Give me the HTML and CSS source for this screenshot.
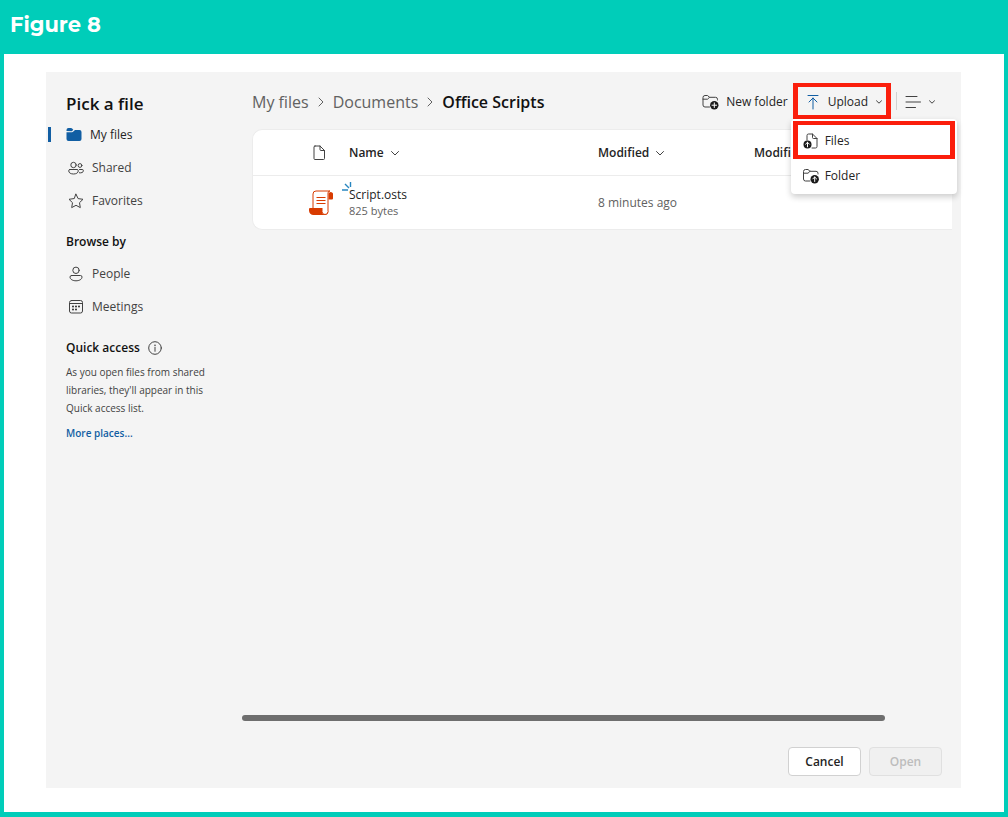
FILE: index.html
```
<!DOCTYPE html>
<html lang="en">
<head>
    <meta charset="UTF-8">
    <meta name="viewport" content="width=device-width, initial-scale=1.0">
    <title>Figure 8</title>
    <link rel="stylesheet" href="styles.css">
</head>
<body>
    <h1 class="figure-title">Figure 8</h1>
    <div class="sheet">
        <div class="picker">
            <aside class="sidebar">
                <h2>Pick a file</h2>
                <nav class="nav">
                    <a href="#" class="nav-item active">
                        <svg width="16" height="16" viewBox="0 0 16 16"><path fill="#115ea3" d="M.5 4V3A2 2 0 0 1 2.500 1H5a1.500 1.500 0 0 1 1.100.5L7.300 2.700 5.800 4.200Z"/><path fill="#115ea3" d="M.5 5.200H6a1.500 1.500 0 0 0 1-.4L9 3H13.500a2 2 0 0 1 2 2v7a2 2 0 0 1-2 2H2.500a2 2 0 0 1-2-2Z"/></svg>
                        My files
                    </a>
                    <a href="#" class="nav-item">
                        <svg class="line" width="16" height="16" viewBox="0 0 16 16"><circle cx="5.500" cy="5" r="2.700"/><circle cx="12" cy="5.500" r="1.900"/><path d="M2 9.500H9a1.300 1.300 0 0 1 1.300 1.300C10.300 13 8 14 5.500 14S.7 13 .7 10.800A1.300 1.300 0 0 1 2 9.500ZM11.500 9.500h2.700a1.200 1.200 0 0 1 1.200 1.200c0 1.700-2 2.500-4 2.100"/></svg>
                        Shared
                    </a>
                    <a href="#" class="nav-item">
                        <svg class="line" width="16" height="16" viewBox="0 0 16 16"><path d="M8 1.200 10.100 5.600 15 6.300 11.500 9.700 12.300 14.600 8 12.300 3.700 14.600 4.500 9.700 1 6.300 5.900 5.600Z"/></svg>
                        Favorites
                    </a>
                </nav>
                <h3>Browse by</h3>
                <nav class="nav">
                    <a href="#" class="nav-item">
                        <svg class="line" width="16" height="16" viewBox="0 0 16 16"><circle cx="8" cy="4.300" r="3.200"/><path d="M3.500 9.500h9A1.500 1.500 0 0 1 14 11c0 2.500-3 3.800-6 3.800S2 13.500 2 11A1.500 1.500 0 0 1 3.500 9.500Z"/></svg>
                        People
                    </a>
                    <a href="#" class="nav-item">
                        <svg class="line" width="16" height="16" viewBox="0 0 16 16"><rect x="1.500" y="1.500" width="13" height="12.500" rx="2"/><path d="M1.500 4.500h13"/><g class="solid"><circle cx="5" cy="10.500" r=".9"/><circle cx="8" cy="7.500" r=".9"/><circle cx="8" cy="10.500" r=".9"/><circle cx="11" cy="7.500" r=".9"/><circle cx="5" cy="7.500" r=".9"/></g></svg>
                        Meetings
                    </a>
                </nav>
                <h3>
                    Quick access
                    <svg class="line" width="14" height="14" viewBox="0 0 14 14"><circle cx="7" cy="7" r="6.300"/><path d="M7 6.200V10.300"/><circle class="solid" cx="7" cy="4.200" r=".7"/></svg>
                </h3>
                <p class="hint">As you open files from shared libraries, they'll appear in this Quick access list.</p>
                <a href="#" class="more">More places...</a>
            </aside>

            <main class="main">
                <header class="topbar">
                    <nav class="breadcrumb" aria-label="Breadcrumb">
                        <a href="#">My files</a>
                        <svg class="line" width="8" height="10" viewBox="0 0 8 10"><path d="M2 1 6 5 2 9"/></svg>
                        <a href="#">Documents</a>
                        <svg class="line" width="8" height="10" viewBox="0 0 8 10"><path d="M2 1 6 5 2 9"/></svg>
                        <span class="current">Office Scripts</span>
                    </nav>
                    <div class="commands">
                        <button type="button" class="command">
                            <svg class="line" width="17" height="16" viewBox="0 0 17 16"><path d="M7.500 13H3A2 2 0 0 1 1 11V3.500a2 2 0 0 1 2-2H5.500L7.500 3.300H13.500a2 2 0 0 1 2 2V6M1 5.200H5.500L7.500 3.300"/><circle class="solid" cx="12.300" cy="11.200" r="4.200"/><path class="plus" d="M12.300 8.900v4.600M10 11.200h4.600"/></svg>
                            New folder
                        </button>
                        <div class="upload">
                            <button type="button" class="command marked" aria-haspopup="true" aria-expanded="true">
                                <svg class="line arrow" width="16" height="16" viewBox="0 0 16 16"><path d="M3 1.500H13M8 15V4M4 8 8 4 12 8"/></svg>
                                Upload
                                <svg class="line chevron" width="8" height="8" viewBox="0 0 8 8"><path d="M1.500 2.800 4 5.200 6.500 2.800"/></svg>
                            </button>
                            <div class="menu">
                                <button type="button" class="menu-item marked">
                                    <svg class="line" width="16" height="16" viewBox="0 0 16 16"><path d="M4 7V2.500A1.500 1.500 0 0 1 5.500 1H9.500L14 5.500V13.500A1.500 1.500 0 0 1 12.500 15H9M9.500 1V4.500a1 1 0 0 0 1 1H14"/><circle class="solid" cx="4.500" cy="11.500" r="4"/><path class="plus" d="M4.500 13.800V9.300M2.600 11.200 4.500 9.300 6.400 11.200"/></svg>
                                    Files
                                </button>
                                <button type="button" class="menu-item">
                                    <svg class="line" width="16" height="16" viewBox="0 0 16 16"><path d="M7 13H2.500a2 2 0 0 1-2-2V3.500a2 2 0 0 1 2-2H5L7 3.300H13a2 2 0 0 1 2 2V6M.5 5.200H5L7 3.300"/><circle class="solid" cx="11.700" cy="11.200" r="4.200"/><path class="plus" d="M11.700 13.500V9M9.800 10.900 11.700 9 13.600 10.900"/></svg>
                                    Folder
                                </button>
                            </div>
                        </div>
                        <button type="button" class="command view" aria-label="View options">
                            <svg class="line" width="16" height="14" viewBox="0 0 16 14"><path d="M1 1.500H12M1 7H15.500M1 12.500H10.500"/></svg>
                            <svg class="line chevron" width="8" height="8" viewBox="0 0 8 8"><path d="M1.500 2.800 4 5.200 6.500 2.800"/></svg>
                        </button>
                    </div>
                </header>

                <div class="content">
                    <table class="files">
                        <thead>
                            <tr>
                                <th class="col-icon"><svg class="line" width="14" height="16" viewBox="0 0 14 16"><path d="M3 1H8L12.500 5.500V13.500A1 1 0 0 1 11.500 14.500H3A1 1 0 0 1 2 13.500V2A1 1 0 0 1 3 1ZM8 1V4.500a1 1 0 0 0 1 1H12.500"/></svg></th>
                                <th class="col-name">Name <svg class="line" width="8" height="8" viewBox="0 0 8 8"><path d="M.5 2.500 4 6 7.500 2.500"/></svg></th>
                                <th class="col-modified">Modified <svg class="line" width="8" height="8" viewBox="0 0 8 8"><path d="M.5 2.500 4 6 7.500 2.500"/></svg></th>
                                <th>Modified</th>
                            </tr>
                        </thead>
                        <tbody>
                            <tr>
                                <td class="col-icon">
                                    <svg width="26" height="26" viewBox="0 0 26 26"><path fill="#fff" stroke="#d83b01" d="M5 19V4a3 3 0 0 1 3-3H22a2 2 0 0 0-2 2V21.500a3 3 0 0 1-3 3H12V19Z"/><path fill="#d83b01" d="M20.500 9.500V3.500a2.400 2.400 0 0 1 4.500 0V8.500a1 1 0 0 1-1 1ZM1 19a1 1 0 0 1 1-1H14v3.500a3 3 0 0 0 3 3.500H5.500A4.500 4.500 0 0 1 1 20.500Z"/><path fill="#fff" stroke="#d83b01" d="M14 18v3.500a3 3 0 0 0 6 0"/><path stroke="#d83b01" d="M8.500 7.500h9M8.500 10.500h9M8.500 13.500h9"/></svg>
                                </td>
                                <td>
                                    <div class="file">
                                        <svg class="new-mark" width="10" height="10" viewBox="0 0 10 10"><path d="M8.500 0V5M3 2 7 6M0 8H6"/></svg>
                                        <span class="file-name">Script.osts</span>
                                        <span class="file-size">825 bytes</span>
                                    </div>
                                </td>
                                <td class="muted">8 minutes ago</td>
                                <td></td>
                            </tr>
                        </tbody>
                    </table>
                </div>

                <div class="scrollbar"></div>
                <footer class="actions">
                    <button type="button" class="btn">Cancel</button>
                    <button type="button" class="btn" disabled>Open</button>
                </footer>
            </main>
        </div>
    </div>
</body>
</html>
```
FILE: styles.css
```
:root {
    --teal: #00cdb9;
    --blue: #115ea3;
    --mark: #fb1e0c;
    --bg-panel: #f4f4f4;
    --text-main: #242424;
    --text-muted: #616161;
    --border: #ececec;
}
* {
    box-sizing: border-box;
}
body {
    margin: 0;
    min-height: 100vh;
    display: flex;
    flex-direction: column;
    padding: 0 4px 5px;
    background: var(--teal);
    color: var(--text-main);
    font-family: 'Segoe UI', 'Open Sans', sans-serif;
    font-size: 12px;
    line-height: 18px;
}
h1, h2, h3, p {
    margin: 0;
}
a {
    color: inherit;
    text-decoration: none;
}
button {
    font: inherit;
    color: inherit;
    cursor: pointer;
}
svg {
    flex: none;
    fill: none;
}
.line {
    stroke: #424242;
    stroke-linecap: round;
    stroke-linejoin: round;
}
.solid {
    fill: #1a1a1a;
    stroke: none;
}
.plus {
    stroke: #fff;
}
.figure-title {
    padding: 10px 6px 14px;
    color: #fff;
    font-family: Montserrat, Inter, sans-serif;
    font-size: 21px;
    line-height: 30px;
    font-weight: 700;
}
.sheet {
    flex: 1;
    display: flex;
    padding: 18px 43px 24px 42px;
    background: #fff;
}
.picker {
    flex: 1;
    display: flex;
    background: var(--bg-panel);
}

/* Sidebar */
.sidebar {
    width: 196px;
    padding: 20px 20px 0;
}
.sidebar h2 {
    margin-bottom: 2px;
    font-size: 17px;
    line-height: 24px;
    font-weight: 600;
    color: #111;
}
.sidebar h3 {
    display: flex;
    align-items: center;
    gap: 8px;
    padding: 16px 0 6px;
    font-size: 12px;
    line-height: 18px;
    font-weight: 600;
    color: #111;
}
.nav-item {
    display: flex;
    align-items: center;
    gap: 8px;
    height: 33px;
    margin-left: -18px;
    padding-left: 20px;
    color: #424242;
}
.nav-item.active {
    padding-left: 18px;
    font-weight: 500;
    color: var(--text-main);
}
.nav-item.active::before {
    content: "";
    width: 3px;
    height: 15px;
    margin: 0 7px 0 -18px;
    background: var(--blue);
}
.hint {
    margin-right: -4px;
    padding-right: 20px;
    font-size: 10px;
    color: #424242;
}
.more {
    display: block;
    margin-top: 7px;
    font-size: 10px;
    font-weight: 600;
    color: var(--blue);
}

/* Breadcrumb and commands */
.main {
    flex: 1;
    min-width: 0;
    display: flex;
    flex-direction: column;
    padding-top: 11px;
}
.topbar {
    display: flex;
    align-items: center;
    justify-content: space-between;
    height: 36px;
    padding: 0 25px 0 10px;
}
.breadcrumb {
    display: flex;
    align-items: center;
    gap: 8px;
    padding-top: 2px;
    font-size: 16px;
    line-height: 24px;
    color: var(--text-muted);
    white-space: nowrap;
}
.breadcrumb .line {
    stroke: var(--text-muted);
}
.current {
    font-weight: 600;
    color: #111;
}
.commands {
    display: flex;
    align-items: center;
    gap: 5px;
}
.command {
    display: flex;
    align-items: center;
    gap: 7px;
    height: 36px;
    padding: 2px 0 0;
    border: 0;
    background: none;
    white-space: nowrap;
}
.command.marked {
    padding: 2px 3px 0 7px;
}
.marked.marked {
    border: solid var(--mark);
    border-width: 4px 5px;
}
.arrow {
    stroke: var(--blue);
}
.command.view {
    height: 18px;
    padding-left: 8px;
    border-left: 1px solid #d1d1d1;
}
.upload {
    position: relative;
}
.menu {
    position: absolute;
    top: 36px;
    left: -2px;
    width: 166px;
    padding: 2px;
    background: #fff;
    border-radius: 4px;
    box-shadow: 0 3px 6px rgba(0, 0, 0, 0.2);
}
.menu-item {
    display: flex;
    align-items: center;
    gap: 6px;
    width: 100%;
    height: 33px;
    padding: 0 10px;
    border: 0;
    background: none;
}
.menu-item.marked {
    height: 38px;
    padding: 2px 5px 0;
}

/* File list */
.content {
    flex: 1;
    padding: 10px 9px 0 10px;
}
.files {
    width: 100%;
    table-layout: fixed;
    border-spacing: 0;
    background: #fff;
    border: 1px solid var(--border);
    border-right: 0;
    border-radius: 10px 0 0 10px;
}
.files th {
    height: 46px;
    padding: 0;
    border-bottom: 1px solid var(--border);
    text-align: left;
    font-weight: 600;
    white-space: nowrap;
}
.files th svg {
    margin-left: 4px;
}
.files td {
    height: 53px;
    padding: 0;
}
.files .col-icon {
    width: 96px;
    padding-left: 55px;
}
.files .col-icon svg {
    display: block;
}
.col-name {
    width: 249px;
}
.col-modified {
    width: 156px;
}
.file {
    position: relative;
    display: flex;
    flex-direction: column;
}
.file-name {
    line-height: 16px;
}
.file-size {
    font-size: 11px;
    line-height: 16px;
    color: var(--text-muted);
}
.new-mark {
    position: absolute;
    top: -5px;
    left: -7px;
    stroke: #2886c0;
    stroke-width: 1.4;
}
.files .muted {
    color: var(--text-muted);
}
.scrollbar {
    height: 6px;
    margin-right: 76px;
    border-radius: 3px;
    background: #6e6e6e;
}

/* Footer buttons */
.actions {
    display: flex;
    justify-content: flex-end;
    gap: 8px;
    padding: 26px 19px 12px;
}
.btn {
    width: 73px;
    height: 29px;
    padding: 0;
    border: 1px solid #d1d1d1;
    border-radius: 4px;
    background: #fff;
    font-weight: 600;
}
.btn:disabled {
    border-color: #e0e0e0;
    background: #f0f0f0;
    color: #bdbdbd;
    cursor: default;
}
```
